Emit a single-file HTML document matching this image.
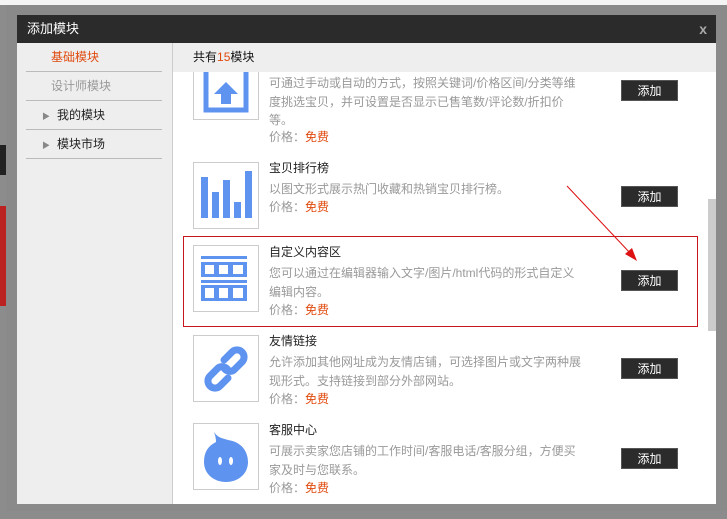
<!DOCTYPE html>
<html><head><meta charset="utf-8">
<style>
*{margin:0;padding:0;box-sizing:border-box}
body{width:727px;height:519px;overflow:hidden;background:#8c8c8c;font-family:"Liberation Sans","Noto Sans CJK SC",sans-serif;font-size:12px;position:relative}
.a{position:absolute}
.title{left:17px;top:15px;width:699px;height:28px;background:#2b2b2b;color:#fff;font-size:13px;line-height:28px;padding-left:10px}
.close{right:20px;top:15px;line-height:28px;color:#aaa;font-size:14px;font-weight:bold}
.left{left:17px;top:43px;width:156px;height:461px;background:#eeeeee;border-right:1px solid #ccc}
.nav{position:absolute;left:9px;width:136px;height:29px;border-bottom:1px solid #bbb;line-height:29px;color:#222}
.main{left:173px;top:43px;width:543px;height:461px;background:#fff;overflow:hidden}
.hdr{left:0;top:0;width:543px;height:29px;background:#eeeeee;line-height:29px;padding-left:20px;color:#111;z-index:2}
.box{position:absolute;left:20px;width:66px;height:67px;border:1px solid #ccc;background:#fff}
.t{position:absolute;left:96px;color:#222;line-height:18px}
.d{position:absolute;left:96px;width:312px;color:#999;line-height:18.5px}
.p{position:absolute;left:96px;color:#999;line-height:18px}
.p b{font-weight:normal;color:#e04a0e}
.btn{position:absolute;left:448px;width:57px;height:21px;background:#2b2b2b;color:#fff;text-align:center;line-height:20px;font-size:12px;border:1px solid #555}
</style></head><body>
<div class="a" style="left:0;top:0;width:727px;height:5px;background:#f4f4f4"></div>
<div class="a" style="left:0;top:145px;width:6px;height:30px;background:#222"></div>
<div class="a" style="left:0;top:206px;width:6px;height:100px;background:#b22"></div>
<div class="a" style="left:6px;top:5px;width:721px;height:506px;background:#8a8a8a"></div>
<div class="a title">添加模块</div>
<div class="a close">x</div>
<div class="a left">
 <div class="nav" style="top:0;padding-left:25px;color:#e04a0e">基础模块</div>
 <div class="nav" style="top:29px;padding-left:25px;color:#999">设计师模块</div>
 <div class="nav" style="top:58px;padding-left:16px"><span style="color:#888;font-size:8px;margin-right:7px">▶</span>我的模块</div>
 <div class="nav" style="top:87px;padding-left:16px"><span style="color:#888;font-size:8px;margin-right:7px">▶</span>模块市场</div>
</div>
<div class="a main">
 <div class="a hdr">共有<span style="color:#e04a0e">15</span>模块</div>
 <div class="box" style="top:10px"><svg width="64" height="65"><path d="M12 14 V56 H52 V14" fill="none" stroke="#5f93f0" stroke-width="5"/><path d="M32 28 L20 40 H27 V50 H37 V40 H44 Z" fill="#5f93f0"/></svg></div>
 <div class="d" style="top:31px">可通过手动或自动的方式，按照关键词/价格区间/分类等维度挑选宝贝，并可设置是否显示已售笔数/评论数/折扣价等。</div>
 <div class="p" style="top:85px">价格：<b>免费</b></div>
 <div class="btn" style="top:37px">添加</div>
 <div class="box" style="top:119px"><svg width="64" height="65"><g fill="#5f93f0"><rect x="7" y="14" width="7" height="41"/><rect x="18" y="29" width="7" height="26"/><rect x="29" y="17" width="7" height="38"/><rect x="40" y="39" width="7" height="16"/><rect x="51" y="8" width="7" height="47"/></g></svg></div>
 <div class="t" style="top:116px">宝贝排行榜</div>
 <div class="d" style="top:137px">以图文形式展示热门收藏和热销宝贝排行榜。</div>
 <div class="p" style="top:155px">价格：<b>免费</b></div>
 <div class="btn" style="top:143px">添加</div>
 <div class="box" style="top:202px"><svg width="64" height="65"><g fill="#5f93f0"><rect x="7" y="10" width="46" height="3"/><rect x="7" y="16" width="46" height="15"/><rect x="7" y="34" width="46" height="3"/><rect x="7" y="39" width="46" height="16"/></g><g fill="#fff"><rect x="11" y="19" width="9" height="9"/><rect x="25" y="19" width="9" height="9"/><rect x="39" y="19" width="10" height="9"/><rect x="11" y="42" width="9" height="10"/><rect x="25" y="42" width="9" height="10"/><rect x="39" y="42" width="10" height="10"/></g></svg></div>
 <div class="t" style="top:200px">自定义内容区</div>
 <div class="d" style="top:221px">您可以通过在编辑器输入文字/图片/html代码的形式自定义编辑内容。</div>
 <div class="p" style="top:258px">价格：<b>免费</b></div>
 <div class="btn" style="top:227px">添加</div>
 <div class="box" style="top:292px"><svg width="64" height="65"><g fill="none" stroke="#5f93f0" stroke-width="7" stroke-linecap="round"><path d="M30 24 l8 -8 a7 7 0 0 1 10 10 l-8 8 a7 7 0 0 1 -10 -2"/><path d="M34 42 l-8 8 a7 7 0 0 1 -10 -10 l8 -8 a7 7 0 0 1 10 2"/></g></svg></div>
 <div class="t" style="top:289px">友情链接</div>
 <div class="d" style="top:310px">允许添加其他网址成为友情店铺，可选择图片或文字两种展现形式。支持链接到部分外部网站。</div>
 <div class="p" style="top:347px">价格：<b>免费</b></div>
 <div class="btn" style="top:315px">添加</div>
 <div class="box" style="top:380px"><svg width="64" height="65"><path d="M20 8 C24 14 28 14 34 16 C48 18 54 28 54 38 C54 50 44 58 32 58 C20 58 10 50 10 38 C10 28 14 22 22 18 C22 14 21 11 20 8 Z" fill="#5f93f0"/><ellipse cx="26" cy="37" rx="2" ry="4" fill="#fff"/><ellipse cx="37" cy="37" rx="2" ry="4" fill="#fff"/></svg></div>
 <div class="t" style="top:378px">客服中心</div>
 <div class="d" style="top:399px">可展示卖家您店铺的工作时间/客服电话/客服分组，方便买家及时与您联系。</div>
 <div class="p" style="top:436px">价格：<b>免费</b></div>
 <div class="btn" style="top:405px">添加</div>
 <div class="a" style="left:535px;top:156px;width:8px;height:132px;background:#cccccc"></div>
</div>
<div class="a" style="left:183px;top:236px;width:515px;height:91px;border:1px solid #c8161d"></div>
<svg class="a" style="left:0;top:0" width="727" height="519"><line x1="567" y1="186" x2="631" y2="254" stroke="#d11" stroke-width="1"/><path d="M637 261 L625 254 L632 248 Z" fill="#d11"/></svg>
</body></html>
